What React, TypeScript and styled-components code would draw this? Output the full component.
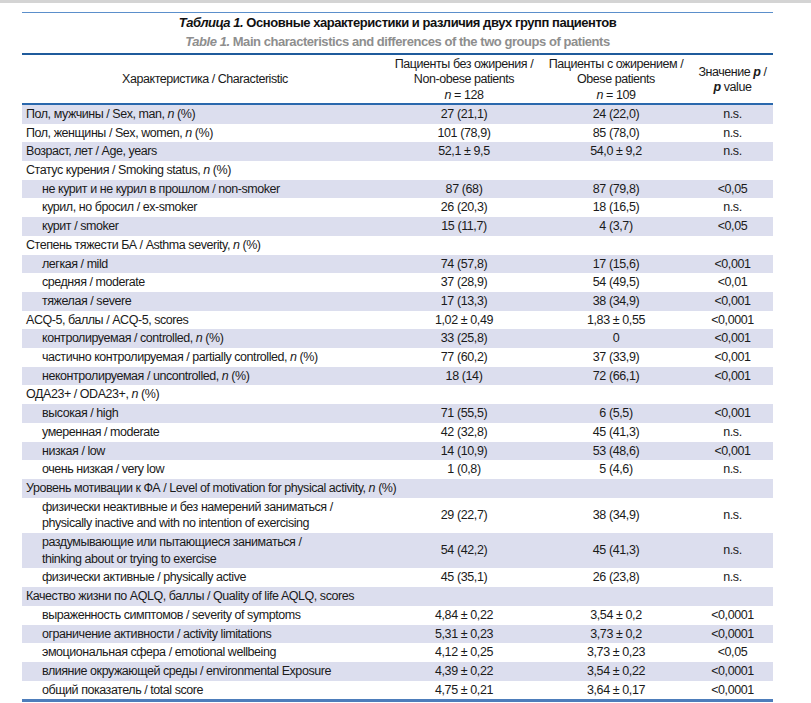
import React from "react";
import styled, { createGlobalStyle } from "styled-components";

const Global = createGlobalStyle`
  html, body { margin: 0; padding: 0; background: #ffffff; }
  body { font-family: "Liberation Sans Narrow", "Arial Narrow", "Liberation Sans", Arial, sans-serif; color: #1a1a1a; }
`;

const TopStrip = styled.div`
  height: 3px;
  background: #d4d4d4;
`;

const Sheet = styled.div`
  width: 751px;
  margin: 9px 0 0 22px;
  display: flex;
  flex-direction: column;
`;

const Caption = styled.div`
  border-top: 1px solid #5b8fcb;
  border-bottom: 2px solid #1f5b9c;
  padding: 1px 0 2px 0;
  display: flex;
  flex-direction: column;
  align-items: center;
`;

const TitleLine = styled.div<{ $muted?: boolean }>`
  font-size: 13px;
  font-weight: 700;
  line-height: 18.5px;
  letter-spacing: -0.45px;
  color: ${(p) => (p.$muted ? "#8e8e8e" : "#111111")};
`;

const Head = styled.div`
  display: grid;
  grid-template-columns: 366px 152px 152px 81px;
  border-bottom: 2px solid #2a68ad;
  padding: 2px 0 0 0;
  align-items: center;
`;

const HeadCell = styled.div`
  font-size: 12.5px;
  letter-spacing: -0.45px;
  line-height: 15.3px;
  text-align: center;
  color: #1a1a1a;
`;

const Body = styled.div`
  display: flex;
  flex-direction: column;
  border-bottom: 3px solid #4d7dbb;
`;

const Row = styled.div<{ $shaded: boolean }>`
  display: grid;
  grid-template-columns: 366px 152px 152px 81px;
  align-items: center;
  background: ${(p) => (p.$shaded ? "#dcdeee" : "#ffffff")};
  padding: 1px 0;
`;

const Label = styled.div<{ $indent: boolean }>`
  font-size: 12.5px;
  letter-spacing: -0.45px;
  line-height: 16.7px;
  white-space: nowrap;
  padding-left: ${(p) => (p.$indent ? "20px" : "4px")};
`;

const Value = styled.div`
  font-size: 12.5px;
  letter-spacing: -0.4px;
  line-height: 16.7px;
  text-align: center;
`;

type RowData = {
  label: React.ReactNode;
  indent?: boolean;
  a?: string;
  b?: string;
  p?: string;
};

const N = () => <i>n</i>;

const rows: RowData[] = [
  { label: <>Пол, мужчины / Sex, man, <N /> (%)</>, a: "27 (21,1)", b: "24 (22,0)", p: "n.s." },
  { label: <>Пол, женщины / Sex, women, <N /> (%)</>, a: "101 (78,9)", b: "85 (78,0)", p: "n.s." },
  { label: "Возраст, лет / Age, years", a: "52,1 ± 9,5", b: "54,0 ± 9,2", p: "n.s." },
  { label: <>Статус курения / Smoking status, <N /> (%)</> },
  { label: "не курит и не курил в прошлом / non-smoker", indent: true, a: "87 (68)", b: "87 (79,8)", p: "<0,05" },
  { label: "курил, но бросил / ex-smoker", indent: true, a: "26 (20,3)", b: "18 (16,5)", p: "n.s." },
  { label: "курит / smoker", indent: true, a: "15 (11,7)", b: "4 (3,7)", p: "<0,05" },
  { label: <>Степень тяжести БА / Asthma severity, <N /> (%)</> },
  { label: "легкая / mild", indent: true, a: "74 (57,8)", b: "17 (15,6)", p: "<0,001" },
  { label: "средняя / moderate", indent: true, a: "37 (28,9)", b: "54 (49,5)", p: "<0,01" },
  { label: "тяжелая / severe", indent: true, a: "17 (13,3)", b: "38 (34,9)", p: "<0,001" },
  { label: "ACQ-5, баллы / ACQ-5, scores", a: "1,02 ± 0,49", b: "1,83 ± 0,55", p: "<0,0001" },
  { label: <>контролируемая / controlled, <N /> (%)</>, indent: true, a: "33 (25,8)", b: "0", p: "<0,001" },
  { label: <>частично контролируемая / partially controlled, <N /> (%)</>, indent: true, a: "77 (60,2)", b: "37 (33,9)", p: "<0,001" },
  { label: <>неконтролируемая / uncontrolled, <N /> (%)</>, indent: true, a: "18 (14)", b: "72 (66,1)", p: "<0,001" },
  { label: <>ОДА23+ / ODA23+, <N /> (%)</> },
  { label: "высокая / high", indent: true, a: "71 (55,5)", b: "6 (5,5)", p: "<0,001" },
  { label: "умеренная / moderate", indent: true, a: "42 (32,8)", b: "45 (41,3)", p: "n.s." },
  { label: "низкая / low", indent: true, a: "14 (10,9)", b: "53 (48,6)", p: "<0,001" },
  { label: "очень низкая / very low", indent: true, a: "1 (0,8)", b: "5 (4,6)", p: "n.s." },
  { label: <>Уровень мотивации к ФА / Level of motivation for physical activity, <N /> (%)</> },
  {
    label: <>физически неактивные и без намерений заниматься /<br />physically inactive and with no intention of exercising</>,
    indent: true, a: "29 (22,7)", b: "38 (34,9)", p: "n.s.",
  },
  {
    label: <>раздумывающие или пытающиеся заниматься /<br />thinking about or trying to exercise</>,
    indent: true, a: "54 (42,2)", b: "45 (41,3)", p: "n.s.",
  },
  { label: "физически активные / physically active", indent: true, a: "45 (35,1)", b: "26 (23,8)", p: "n.s." },
  { label: "Качество жизни по AQLQ, баллы / Quality of life AQLQ, scores" },
  { label: "выраженность симптомов / severity of symptoms", indent: true, a: "4,84 ± 0,22", b: "3,54 ± 0,2", p: "<0,0001" },
  { label: "ограничение активности / activity limitations", indent: true, a: "5,31 ± 0,23", b: "3,73 ± 0,2", p: "<0,0001" },
  { label: "эмоциональная сфера / emotional wellbeing", indent: true, a: "4,12 ± 0,25", b: "3,73 ± 0,23", p: "<0,05" },
  { label: "влияние окружающей среды / environmental Exposure", indent: true, a: "4,39 ± 0,22", b: "3,54 ± 0,22", p: "<0,0001" },
  { label: "общий показатель / total score", indent: true, a: "4,75 ± 0,21", b: "3,64 ± 0,17", p: "<0,0001" },
];

export default function App() {
  return (
    <>
      <Global />
      <TopStrip />
      <Sheet>
        <Caption>
          <TitleLine>
            <i>Таблица 1.</i> Основные характеристики и различия двух групп пациентов
          </TitleLine>
          <TitleLine $muted>
            <i>Table 1.</i> Main characteristics and differences of the two groups of patients
          </TitleLine>
        </Caption>
        <Head>
          <HeadCell>Характеристика / Characteristic</HeadCell>
          <HeadCell>
            Пациенты без ожирения /<br />Non-obese patients<br />
            <i>n</i> = 128
          </HeadCell>
          <HeadCell>
            Пациенты с ожирением /<br />Obese patients<br />
            <i>n</i> = 109
          </HeadCell>
          <HeadCell>
            Значение <b><i>p</i></b> /<br />
            <b><i>p</i></b> value
          </HeadCell>
        </Head>
        <Body>
          {rows.map((r, i) => (
            <Row key={i} $shaded={i % 2 === 0}>
              <Label $indent={!!r.indent}>{r.label}</Label>
              <Value>{r.a ?? ""}</Value>
              <Value>{r.b ?? ""}</Value>
              <Value>{r.p ?? ""}</Value>
            </Row>
          ))}
        </Body>
      </Sheet>
    </>
  );
}
